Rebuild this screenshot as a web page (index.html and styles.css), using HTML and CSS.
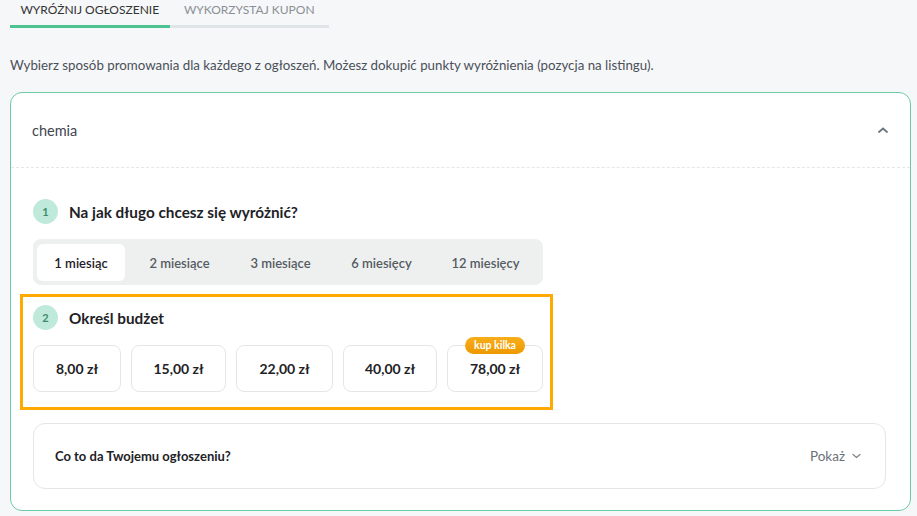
FILE: index.html
```html
<!DOCTYPE html>
<html lang="pl">
<head>
    <meta charset="UTF-8">
    <meta name="viewport" content="width=device-width, initial-scale=1.0">
    <title>Wyróżnij ogłoszenie</title>
    <link rel="stylesheet" href="styles.css">
</head>
<body>
    <div class="page">
        <div class="tabs">
            <div class="tab active">Wyróżnij ogłoszenie</div>
            <div class="tab">Wykorzystaj kupon</div>
        </div>

        <p class="intro">Wybierz sposób promowania dla każdego z ogłoszeń. Możesz dokupić punkty wyróżnienia (pozycja na listingu).</p>

        <div class="card">
            <div class="card-header">
                <span>chemia</span>
                <svg class="chevron-up" width="10" height="6" viewBox="0 0 10 6">
                    <path d="M1 5 L5 1.5 L9 5" fill="none" stroke="#6b7580" stroke-width="1.8" stroke-linecap="round"/>
                </svg>
            </div>

            <div class="card-body">
                <div class="step">
                    <div class="step-title">
                        <span class="step-num">1</span>
                        <h3>Na jak długo chcesz się wyróżnić?</h3>
                    </div>
                    <div class="segments">
                        <button class="segment active">1 miesiąc</button>
                        <button class="segment">2 miesiące</button>
                        <button class="segment">3 miesiące</button>
                        <button class="segment">6 miesięcy</button>
                        <button class="segment">12 miesięcy</button>
                    </div>
                </div>

                <div class="step budget">
                    <div class="step-title">
                        <span class="step-num">2</span>
                        <h3>Określ budżet</h3>
                    </div>
                    <div class="prices">
                        <button class="price w88">8,00 zł</button>
                        <button class="price">15,00 zł</button>
                        <button class="price w97">22,00 zł</button>
                        <button class="price w94">40,00 zł</button>
                        <button class="price w96">
                            <span class="badge">kup kilka</span>
                            78,00 zł
                        </button>
                    </div>
                </div>

                <div class="info-box">
                    <span class="info-title">Co to da Twojemu ogłoszeniu?</span>
                    <span class="info-toggle">Pokaż
                        <svg width="9" height="6" viewBox="0 0 9 6">
                            <path d="M1 1.5 L4.5 4.5 L8 1.5" fill="none" stroke="#7a828a" stroke-width="1.2" stroke-linecap="round"/>
                        </svg>
                    </span>
                </div>
            </div>
        </div>
    </div>
</body>
</html>
```

FILE: styles.css
```css
* {
    box-sizing: border-box;
    margin: 0;
    padding: 0;
}

body {
    background-color: #f6f7f9;
    font-family: Lato, "Open Sans", sans-serif;
    color: #222;
}

.page {
    padding: 0 6px 0 10px;
}

.tabs {
    display: flex;
    width: 319px;
}

.tab {
    flex: 1;
    text-align: center;
    text-transform: uppercase;
    font-size: 12px;
    color: #8a9096;
    padding: 2px 0 8px;
    border-bottom: 3px solid #dfe4e6;
}

.tab.active {
    color: #333;
    border-bottom-color: #4cc391;
}

.intro {
    margin-top: 29px;
    font-size: 13.3px;
    color: #4a5058;
}

.card {
    margin-top: 19px;
    background: #fff;
    border: 1px solid #6ccba3;
    border-radius: 12px;
    height: 419px;
    overflow: hidden;
}

.card-header {
    display: flex;
    justify-content: space-between;
    align-items: center;
    height: 75px;
    padding: 0 22px 0 21px;
    font-size: 14.5px;
    color: #3f4650;
    border-bottom: 1px dashed #e4e6e8;
}

.card-body {
    padding: 31px 24px 0 22px;
}

.step-title {
    display: flex;
    align-items: center;
    gap: 11px;
}

.step-num {
    width: 25px;
    height: 25px;
    border-radius: 50%;
    background: #bfeadb;
    color: #3f8a6c;
    font-size: 11px;
    font-weight: 700;
    display: flex;
    align-items: center;
    justify-content: center;
}

.step-title h3 {
    font-size: 15.3px;
    font-weight: 700;
    color: #1e2226;
}

.segments {
    display: inline-flex;
    margin-top: 15px;
    background: #eef0f0;
    border-radius: 8px;
    padding: 5px 4px 4px;
}

.segment {
    border: none;
    background: transparent;
    font-family: inherit;
    font-size: 13px;
    font-weight: 600;
    color: #555b62;
    height: 37px;
    border-radius: 6px;
    width: 101px;
}

.segment.active {
    width: 88px;
    background: #fff;
    color: #1e2226;
    margin-right: 4px;
}

.segment:last-child {
    width: 107px;
}

.budget {
    margin: 9px -13px 0;
    padding: 8px 7px 15px 10px;
    border: 3px solid #ffaa00;
    width: 533px;
}

.prices {
    display: flex;
    gap: 10px;
    margin-top: 15px;
}

.price {
    position: relative;
    flex-shrink: 0;
    width: 95px;
    height: 47px;
    background: #fff;
    border: 1px solid #e4e6e8;
    border-radius: 8px;
    font-family: inherit;
    font-size: 14px;
    font-weight: 700;
    color: #1e2226;
}

.price.w88 { width: 88px; }
.price.w94 { width: 94px; }
.price.w96 { width: 96px; }
.price.w97 { width: 97px; }

.badge {
    position: absolute;
    top: -9px;
    left: 50%;
    transform: translateX(-50%);
    background: linear-gradient(#f7ae1a, #ee9900);
    color: #fff;
    font-size: 10.5px;
    font-weight: 700;
    padding: 2px 9px 3px;
    border-radius: 9px;
    white-space: nowrap;
}

.info-box {
    margin-top: 13px;
    display: flex;
    justify-content: space-between;
    align-items: center;
    height: 66px;
    padding: 0 24px 0 21px;
    border: 1px solid #e4e6e8;
    border-radius: 12px;
}

.info-title {
    font-size: 13px;
    font-weight: 700;
    color: #1e2226;
}

.info-toggle {
    display: flex;
    align-items: center;
    gap: 7px;
    font-size: 13.5px;
    color: #6b7178;
}
```
